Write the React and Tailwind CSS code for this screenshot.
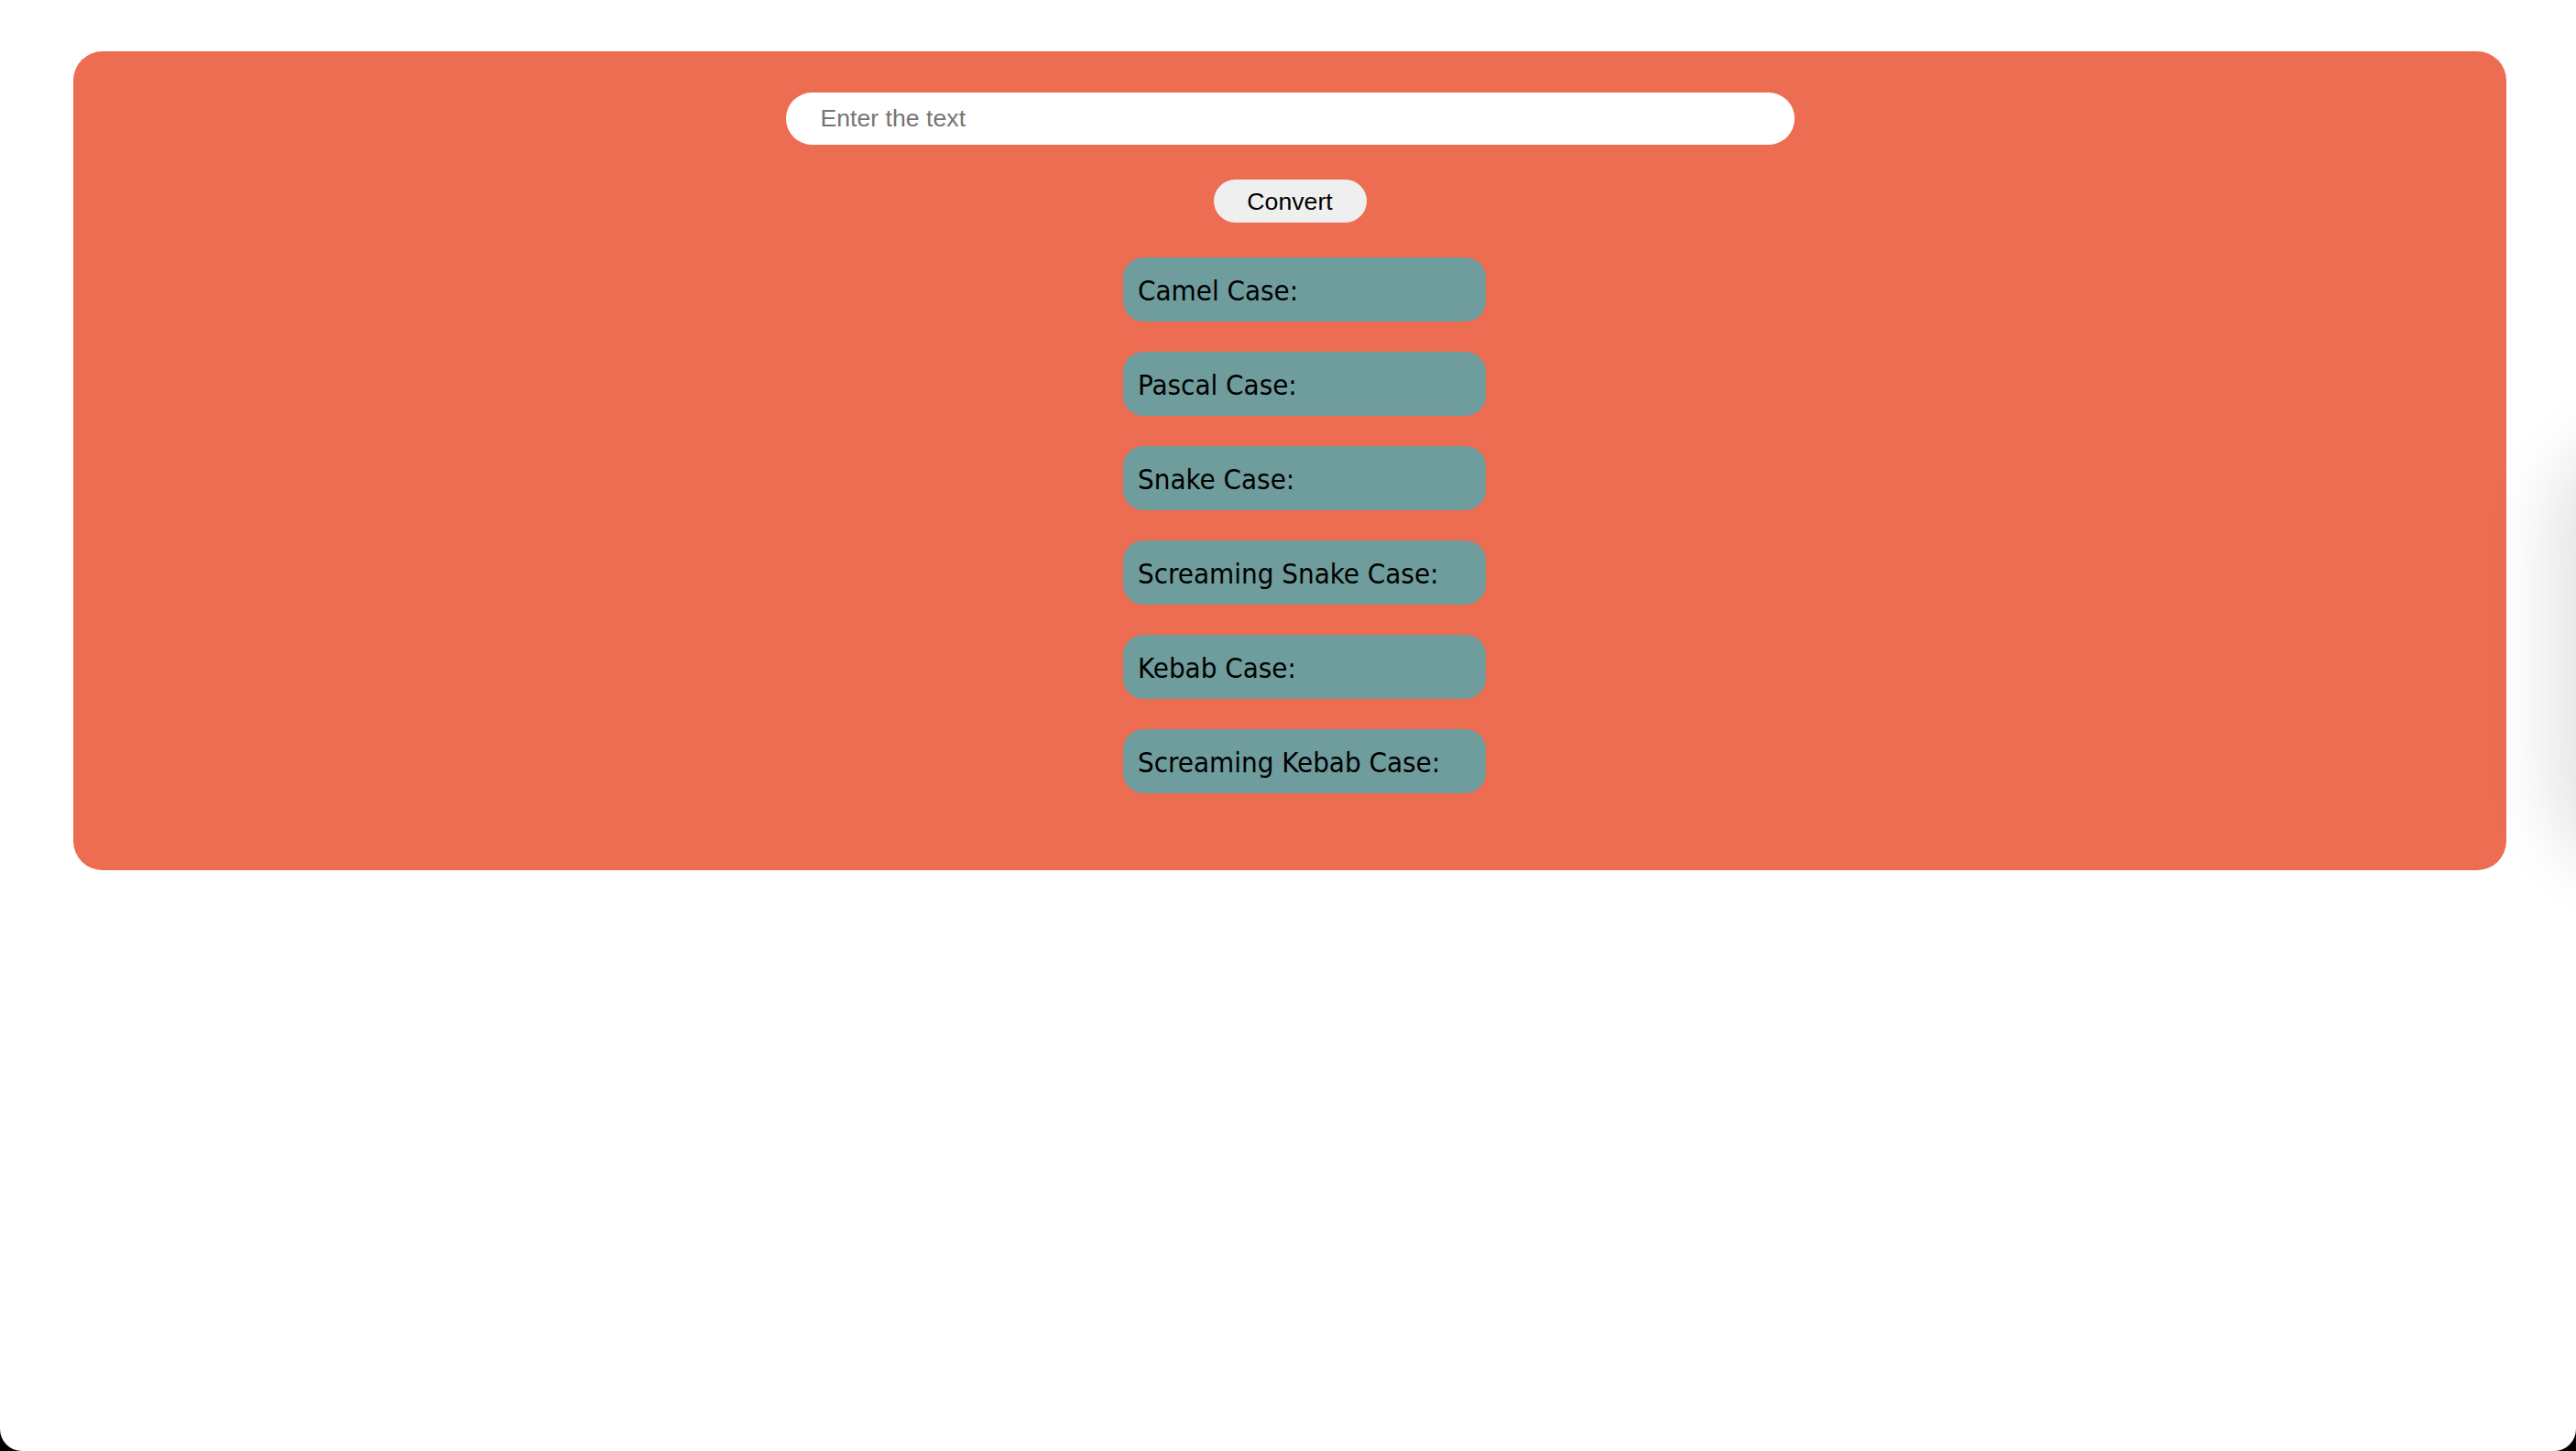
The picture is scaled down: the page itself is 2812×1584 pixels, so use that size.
import React, { useState } from "react";

const CASES = [
    "Camel Case:",
    "Pascal Case:",
    "Snake Case:",
    "Screaming Snake Case:",
    "Kebab Case:",
    "Screaming Kebab Case:",
];

export default function App() {
    const [text, setText] = useState("");

    return (
        <div className="bg-black h-[1584px] w-[2812px] overflow-hidden">
            <div className="relative bg-white h-[1584px] w-[2812px] rounded-b-[24px] overflow-hidden pt-[56px] pl-[80px]">
                {/* panel */}
                <div className="w-[2656px] h-[894px] bg-[#ed6d52] rounded-[32px] flex flex-col items-center pt-[45px]">
                    <input
                        value={text}
                        onChange={(e) => setText(e.target.value)}
                        placeholder="Enter the text"
                        className="w-[1101px] h-[57px] rounded-full bg-white pl-[38px] pr-6 text-[26.67px] text-black placeholder:text-[#757575] outline-none font-['Liberation_Sans',Arial,sans-serif]"
                    />
                    <button className="mt-[38px] h-[47px] w-[167px] rounded-full bg-[#efefef] text-[26.67px] text-black font-['Liberation_Sans',Arial,sans-serif]">
                        Convert
                    </button>

                    {/* results */}
                    <div className="mt-[38px] ml-[32px] flex flex-col gap-[33px]">
                        {CASES.map((c) => (
                            <div
                                key={c}
                                className="w-[396px] h-[70px] rounded-[22px] bg-[#6f9c9c] flex items-center pl-[16px] pt-[3px] text-[31px] text-black font-['DejaVu_Sans_Condensed','DejaVu_Sans',sans-serif] font-stretch-condensed"
                            >
                                {c}
                            </div>
                        ))}
                    </div>
                </div>

                {/* shadow of something off to the right */}
                <div className="absolute left-[2830px] top-[520px] w-[200px] h-[390px] rounded-[60px] bg-[#e6e6e6] shadow-[0_0_70px_50px_rgba(0,0,0,0.1)]" />
            </div>
        </div>
    );
}
